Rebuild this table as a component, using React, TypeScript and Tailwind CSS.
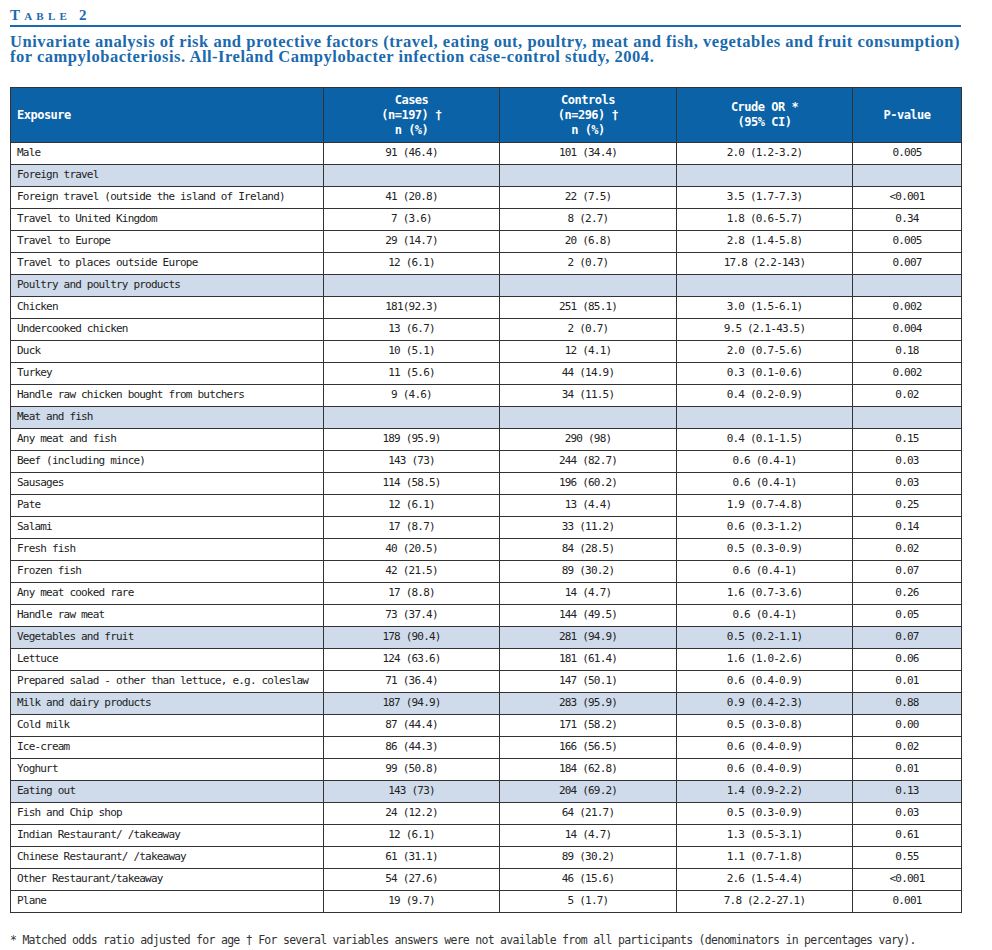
import React from 'react';

type Row = {
  label: string;
  cases?: string;
  controls?: string;
  or?: string;
  p?: string;
  section?: boolean;
};

const rows: Row[] = [
  { label: 'Male', cases: '91 (46.4)', controls: '101 (34.4)', or: '2.0 (1.2-3.2)', p: '0.005' },
  { label: 'Foreign travel', section: true },
  { label: 'Foreign travel (outside the island of Ireland)', cases: '41 (20.8)', controls: '22 (7.5)', or: '3.5 (1.7-7.3)', p: '<0.001' },
  { label: 'Travel to United Kingdom', cases: '7 (3.6)', controls: '8 (2.7)', or: '1.8 (0.6-5.7)', p: '0.34' },
  { label: 'Travel to Europe', cases: '29 (14.7)', controls: '20 (6.8)', or: '2.8 (1.4-5.8)', p: '0.005' },
  { label: 'Travel to places outside Europe', cases: '12 (6.1)', controls: '2 (0.7)', or: '17.8 (2.2-143)', p: '0.007' },
  { label: 'Poultry and poultry products', section: true },
  { label: 'Chicken', cases: '181(92.3)', controls: '251 (85.1)', or: '3.0 (1.5-6.1)', p: '0.002' },
  { label: 'Undercooked chicken', cases: '13 (6.7)', controls: '2 (0.7)', or: '9.5 (2.1-43.5)', p: '0.004' },
  { label: 'Duck', cases: '10 (5.1)', controls: '12 (4.1)', or: '2.0 (0.7-5.6)', p: '0.18' },
  { label: 'Turkey', cases: '11 (5.6)', controls: '44 (14.9)', or: '0.3 (0.1-0.6)', p: '0.002' },
  { label: 'Handle raw chicken bought from butchers', cases: '9 (4.6)', controls: '34 (11.5)', or: '0.4 (0.2-0.9)', p: '0.02' },
  { label: 'Meat and fish', section: true },
  { label: 'Any meat and fish', cases: '189 (95.9)', controls: '290 (98)', or: '0.4 (0.1-1.5)', p: '0.15' },
  { label: 'Beef (including mince)', cases: '143 (73)', controls: '244 (82.7)', or: '0.6 (0.4-1)', p: '0.03' },
  { label: 'Sausages', cases: '114 (58.5)', controls: '196 (60.2)', or: '0.6 (0.4-1)', p: '0.03' },
  { label: 'Pate', cases: '12 (6.1)', controls: '13 (4.4)', or: '1.9 (0.7-4.8)', p: '0.25' },
  { label: 'Salami', cases: '17 (8.7)', controls: '33 (11.2)', or: '0.6 (0.3-1.2)', p: '0.14' },
  { label: 'Fresh fish', cases: '40 (20.5)', controls: '84 (28.5)', or: '0.5 (0.3-0.9)', p: '0.02' },
  { label: 'Frozen fish', cases: '42 (21.5)', controls: '89 (30.2)', or: '0.6 (0.4-1)', p: '0.07' },
  { label: 'Any meat cooked rare', cases: '17 (8.8)', controls: '14 (4.7)', or: '1.6 (0.7-3.6)', p: '0.26' },
  { label: 'Handle raw meat', cases: '73 (37.4)', controls: '144 (49.5)', or: '0.6 (0.4-1)', p: '0.05' },
  { label: 'Vegetables and fruit', section: true, cases: '178 (90.4)', controls: '281 (94.9)', or: '0.5 (0.2-1.1)', p: '0.07' },
  { label: 'Lettuce', cases: '124 (63.6)', controls: '181 (61.4)', or: '1.6 (1.0-2.6)', p: '0.06' },
  { label: 'Prepared salad - other than lettuce, e.g. coleslaw', cases: '71 (36.4)', controls: '147 (50.1)', or: '0.6 (0.4-0.9)', p: '0.01' },
  { label: 'Milk and dairy products', section: true, cases: '187 (94.9)', controls: '283 (95.9)', or: '0.9 (0.4-2.3)', p: '0.88' },
  { label: 'Cold milk', cases: '87 (44.4)', controls: '171 (58.2)', or: '0.5 (0.3-0.8)', p: '0.00' },
  { label: 'Ice-cream', cases: '86 (44.3)', controls: '166 (56.5)', or: '0.6 (0.4-0.9)', p: '0.02' },
  { label: 'Yoghurt', cases: '99 (50.8)', controls: '184 (62.8)', or: '0.6 (0.4-0.9)', p: '0.01' },
  { label: 'Eating out', section: true, cases: '143 (73)', controls: '204 (69.2)', or: '1.4 (0.9-2.2)', p: '0.13' },
  { label: 'Fish and Chip shop', cases: '24 (12.2)', controls: '64 (21.7)', or: '0.5 (0.3-0.9)', p: '0.03' },
  { label: 'Indian Restaurant/ /takeaway', cases: '12 (6.1)', controls: '14 (4.7)', or: '1.3 (0.5-3.1)', p: '0.61' },
  { label: 'Chinese Restaurant/ /takeaway', cases: '61 (31.1)', controls: '89 (30.2)', or: '1.1 (0.7-1.8)', p: '0.55' },
  { label: 'Other Restaurant/takeaway', cases: '54 (27.6)', controls: '46 (15.6)', or: '2.6 (1.5-4.4)', p: '<0.001' },
  { label: 'Plane', cases: '19 (9.7)', controls: '5 (1.7)', or: '7.8 (2.2-27.1)', p: '0.001' },
];

const cell = 'border border-[#333]';
const head = 'border border-[#333] font-bold text-[12px] tracking-[-0.5px]';

export default function App() {
  return (
    <div className="min-h-screen bg-white text-[#222]">
      <div className="ml-[10px] w-[951px] pt-[7px]">
        {/* Heading */}
        <div className="border-b-2 border-[#1a6aad] pb-[2px] font-['Liberation_Serif',serif] text-[15px] font-bold leading-[16px] tracking-[0.28em] text-[#1a6aad] [font-variant:small-caps]">
          Table 2
        </div>
        <h1 className="mt-[7px] font-['Liberation_Serif',serif] text-[16.5px] font-bold leading-[15px] tracking-[0.52px] text-[#1a6aad]">
          <span className="block whitespace-nowrap">
            Univariate analysis of risk and protective factors (travel, eating out, poultry, meat and fish, vegetables and fruit consumption)
          </span>
          <span className="block whitespace-nowrap">
            for campylobacteriosis. All-Ireland Campylobacter infection case-control study, 2004.
          </span>
        </h1>

        {/* Table */}
        <table className="mt-[23px] w-full table-fixed border-collapse border border-[#333] font-['DejaVu_Sans_Mono',monospace] text-[11px] tracking-[-0.8px]">
          <colgroup>
            <col className="w-[313px]" />
            <col className="w-[176px]" />
            <col className="w-[177px]" />
            <col className="w-[176px]" />
            <col className="w-[109px]" />
          </colgroup>
          <thead>
            <tr className="h-[55px] bg-[#0b62a6] text-white">
              <th className={`${head} px-[6px] text-left`}>Exposure</th>
              <th className={`${head} text-center leading-[15px]`}>
                Cases<br />(n=197) †<br />n (%)
              </th>
              <th className={`${head} text-center leading-[15px]`}>
                Controls<br />(n=296) †<br />n (%)
              </th>
              <th className={`${head} text-center leading-[15px]`}>
                Crude OR *<br />(95% CI)
              </th>
              <th className={`${head} text-center`}>P-value</th>
            </tr>
          </thead>
          <tbody>
            {rows.map((r) => (
              <tr key={r.label} className={`h-[22px] ${r.section ? 'bg-[#cfdbeb]' : 'bg-white'}`}>
                <td className={`${cell} px-[6px] text-left`}>{r.label}</td>
                <td className={`${cell} text-center`}>{r.cases}</td>
                <td className={`${cell} text-center`}>{r.controls}</td>
                <td className={`${cell} text-center`}>{r.or}</td>
                <td className={`${cell} text-center`}>{r.p}</td>
              </tr>
            ))}
          </tbody>
        </table>

        <p className="mt-[19px] font-['DejaVu_Sans_Mono',monospace] text-[11.5px] tracking-[-0.72px] text-[#333]">
          * Matched odds ratio adjusted for age † For several variables answers were not available from all participants (denominators in percentages vary).
        </p>
      </div>
    </div>
  );
}
